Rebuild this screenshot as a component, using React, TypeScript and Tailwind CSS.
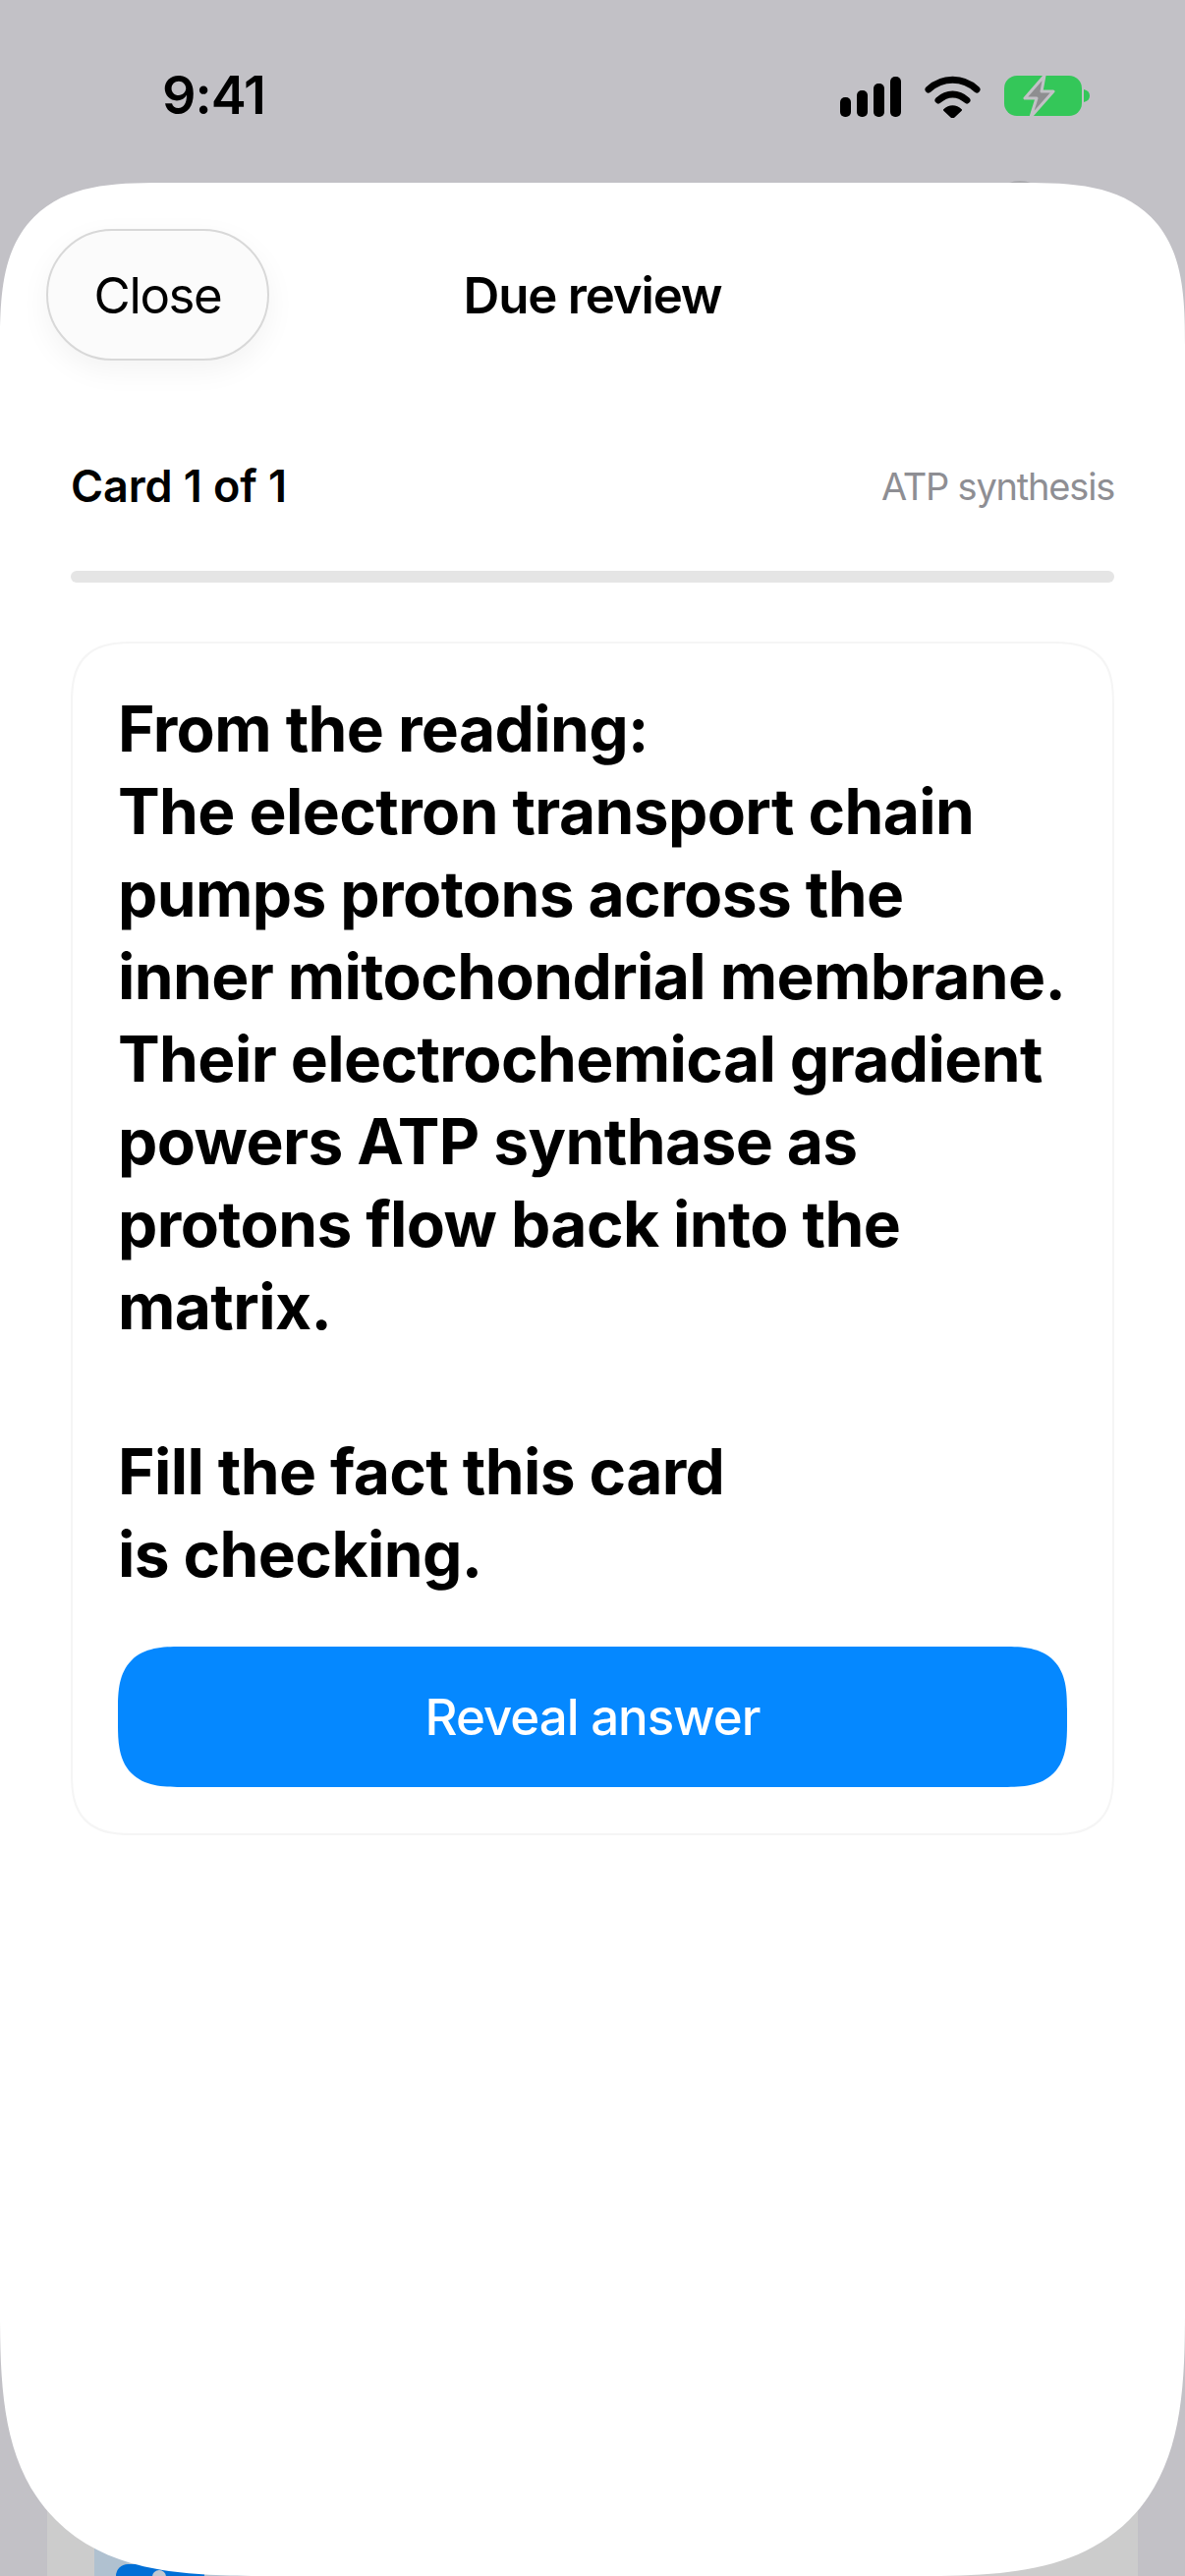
const prompt = `From the reading:
The electron transport chain
pumps protons across the
inner mitochondrial membrane.
Their electrochemical gradient
powers ATP synthase as
protons flow back into the
matrix.

Fill the fact this card
is checking.`

function StatusBar() {
    return (
        <div className="relative z-10 flex h-[186px] items-start justify-between pl-[165px] pr-[97px] pt-[63px]">
            <p className="text-[54px] leading-[68px] font-semibold tracking-[-1px] text-black">9:41</p>
            <div className="flex items-center gap-[24px] pt-[13px]">
                <svg width="62" height="41" viewBox="0 0 62 41" fill="#000">
                    <rect x="0" y="21" width="11" height="20" rx="5" />
                    <rect x="17" y="14" width="11" height="27" rx="5" />
                    <rect x="34" y="7" width="11" height="34" rx="5" />
                    <rect x="51" y="0" width="11" height="41" rx="5" />
                </svg>
                <svg width="57" height="43" viewBox="0 0 57 43" fill="none" stroke="#000" strokeLinecap="round">
                    <path d="M4 14 C18 1 39 1 53 14" strokeWidth="7" />
                    <path d="M14 25 C23 17 34 17 43 25" strokeWidth="7" />
                    <path d="M28.5 43 L20 35 C25 30 32 30 37 35 Z" fill="#000" stroke="#000" strokeWidth="2" strokeLinejoin="round" />
                </svg>
                <svg width="87" height="44" viewBox="0 0 87 44">
                    <rect x="0" y="1" width="79" height="41" rx="13" fill="#34c759" />
                    <path d="M81 15 C85 16 87 18 87 21.500 C87 25 85 27 81 28 Z" fill="#34c759" />
                    <path d="M41 1 L21 24 L33 24 L27 43 L50 17 L38 17 Z" fill="#8e8e90" stroke="#c2c1c6" strokeWidth="3" strokeLinejoin="round" />
                </svg>
            </div>
        </div>
    )
}

function App() {
    return (
        <div className="relative flex h-[2622px] w-[1206px] flex-col overflow-hidden bg-[#c2c1c6] font-['Inter','Liberation_Sans',sans-serif]">
            {/* page peeking out under the sheet */}
            <div className="absolute bottom-0 left-[48px] right-[48px] h-[120px] bg-[#cccccc]">
                <div className="absolute bottom-0 left-[48px] h-[60px] w-[500px] bg-[#b0c1d0]">
                    <div className="absolute bottom-0 left-[22px] h-[12px] w-[90px] rounded-tl-[14px] bg-[#006fd6]">
                        <div className="absolute left-[37px] top-[6px] h-[14px] w-[14px] rounded-full bg-[#c2c8d0]" />
                    </div>
                </div>
            </div>
            <div className="absolute left-[1008px] top-[184px] h-[60px] w-[60px] rounded-full bg-[#a9a9ad]" />

            <StatusBar />

            <div className="relative flex flex-1 flex-col rounded-t-[165px] rounded-b-[270px] bg-white [corner-shape:superellipse(1.55)]">
                <div className="relative flex h-[134px] mt-[47px] items-center justify-center">
                    <button className="absolute left-[47px] top-0 flex h-[134px] w-[227px] items-center justify-center rounded-full border-2 border-[#d8d8d8] bg-[#fbfbfb] pt-[2px] text-[51px] tracking-[-1.4px] text-black shadow-[0_10px_30px_rgba(0,0,0,0.05)]">
                        Close
                    </button>
                    <p className="pt-[2px] text-[51px] font-semibold tracking-[-1.2px] text-black">Due review</p>
                </div>

                <div className="mx-[72px] mt-[93px] flex items-center justify-between">
                    <p className="text-[45px] leading-[70px] font-semibold tracking-[-0.1px] text-black">Card 1 of 1</p>
                    <p className="text-[38px] leading-[70px] tracking-[-1.2px] text-[#8e8e93]">ATP synthesis</p>
                </div>

                <div className="mx-[72px] mt-[51px] h-[12px] rounded-full bg-[#e5e5e5]" />

                <div className="mx-[72px] mt-[60px] rounded-[66px] border-2 border-[#f5f5f5] bg-white px-[46px] pt-[45px] pb-[47px] [corner-shape:superellipse(1.5)]">
                    <p className="text-[64px] leading-[84px] font-bold tracking-[-0.6px] whitespace-pre-line text-black">{prompt}</p>
                    <button className="mt-[52px] flex h-[143px] w-full items-center justify-center rounded-[64px] bg-[#0588ff] pt-[2px] text-[51px] font-medium tracking-[-1px] text-white [corner-shape:superellipse(1.5)]">
                        Reveal answer
                    </button>
                </div>
            </div>
        </div>
    )
}
export default App
